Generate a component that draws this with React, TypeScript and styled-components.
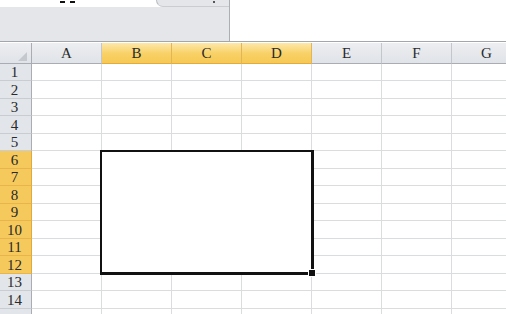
import React from "react";
import styled, { createGlobalStyle, css } from "styled-components";

const Global = createGlobalStyle`
  html, body { margin: 0; padding: 0; background: #ffffff; }
  body { width: 506px; height: 314px; overflow: hidden; }
  #root { width: 506px; height: 314px; overflow: hidden; }
`;

const Page = styled.div`
  width: 506px;
  height: 314px;
  display: flex;
  flex-direction: column;
  background: #fff;
  overflow: hidden;
`;

const TopArea = styled.div`
  flex-shrink: 0;
  display: flex;
  height: 41px;
  border-bottom: 1px solid #a3a7ac;
  box-sizing: content-box;
`;

const Ribbon = styled.div`
  width: 229px;
  display: flex;
  flex-direction: column;
  border-right: 1px solid #abafb4;
`;

const RibbonStrip = styled.div`
  position: relative;
  flex-shrink: 0;
  height: 7px;
  background: #fff;
`;

const Mark = styled.span<{ $left: number }>`
  position: absolute;
  top: 1px;
  left: ${(p) => p.$left}px;
  width: 5px;
  height: 2px;
  background: #111;
`;

const Tab = styled.div`
  position: absolute;
  left: 156px;
  right: 0;
  top: 0;
  height: 7px;
  background: #e4e6ea;
  border-left: 1px solid #b8bcc2;
  border-bottom: 1px solid #c9ccd0;
  border-bottom-left-radius: 7px;
  box-sizing: border-box;
`;

const Dot = styled.span`
  position: absolute;
  left: 56px;
  top: 1px;
  width: 2px;
  height: 2px;
  background: #555;
`;

const RibbonBody = styled.div`
  flex: 1;
  background: #e4e6ea;
`;

const Gap = styled.div`
  flex-shrink: 0;
  height: 1px;
  background: #fff;
`;

const SheetWrap = styled.div`
  position: relative;
  flex: 1;
  min-height: 0;
  overflow: hidden;
`;

const rowHeights = [17, 18, 17, 18, 17, 18, 17, 18, 17, 18, 17, 18, 17, 18];

const Sheet = styled.div`
  display: grid;
  grid-template-columns: 32px repeat(7, 70px);
  grid-template-rows: 21px ${rowHeights.map((h) => `${h}px`).join(" ")} 17px;
  font-family: "Liberation Serif", "DejaVu Serif", serif;
  font-size: 15px;
  color: #2a2a2a;
`;

const headerBase = css`
  box-sizing: border-box;
  display: flex;
  align-items: center;
  justify-content: center;
  line-height: 1;
`;

const Corner = styled.div`
  ${headerBase};
  position: relative;
  background: linear-gradient(#eceef1, #e0e3e7);
  border-right: 1px solid #a9adb3;
  border-bottom: 1px solid #a9adb3;
`;

const CornerTri = styled.svg`
  position: absolute;
  right: 4px;
  bottom: 2px;
`;

const ColHeader = styled.div<{ $active?: boolean }>`
  ${headerBase};
  padding-top: 1px;
  background: ${(p) =>
    p.$active
      ? "linear-gradient(#fde8aa, #f8d064 55%, #f6c955)"
      : "linear-gradient(#eceef1, #e0e3e7)"};
  border-right: 1px solid ${(p) => (p.$active ? "#e2b657" : "#c3c7cd")};
  border-bottom: 1px solid ${(p) => (p.$active ? "#e4ab3c" : "#a9adb3")};
`;

const RowHeader = styled.div<{ $active?: boolean }>`
  ${headerBase};
  padding-right: 2px;
  padding-top: 1px;
  background: ${(p) => (p.$active ? "#f6c95c" : "#e2e5ea")};
  border-right: 1px solid ${(p) => (p.$active ? "#e0a93a" : "#a9adb3")};
  border-bottom: 1px solid ${(p) => (p.$active ? "#e7b54c" : "#c9cdd2")};
`;

const Cell = styled.div`
  box-sizing: border-box;
  border-right: 1px solid #dadcde;
  border-bottom: 1px solid #dadcde;
  background: #fff;
`;

const Selection = styled.div`
  position: absolute;
  left: 100px;
  top: 107px;
  width: 214px;
  height: 125px;
  box-sizing: border-box;
  background: #fff;
  border-top: 2px solid #111;
  border-left: 2px solid #111;
  border-right: 3px solid #111;
  border-bottom: 3px solid #111;
  pointer-events: none;
`;

const FillHandle = styled.div`
  position: absolute;
  right: -5px;
  bottom: -5px;
  width: 6px;
  height: 6px;
  background: #111;
  border: 1px solid #fff;
`;

const columns = ["A", "B", "C", "D", "E", "F", "G"];
const activeCols = new Set(["B", "C", "D"]);

export default function App() {
  const rows = rowHeights.map((_, i) => i + 1);
  return (
    <Page>
      <Global />
      <TopArea>
        <Ribbon>
          <RibbonStrip>
            <Mark $left={60} />
            <Mark $left={70} />
            <Tab>
              <Dot />
            </Tab>
          </RibbonStrip>
          <RibbonBody />
        </Ribbon>
      </TopArea>
      <Gap />
      <SheetWrap>
        <Sheet>
          <Corner>
            <CornerTri width="9" height="9" viewBox="0 0 9 9">
              <polygon points="9,0 9,9 0,9" fill="#c5c9ce" />
            </CornerTri>
          </Corner>
          {columns.map((c) => (
            <ColHeader key={c} $active={activeCols.has(c)}>
              {c}
            </ColHeader>
          ))}
          {rows.map((r) => (
            <React.Fragment key={r}>
              <RowHeader $active={r >= 6 && r <= 12}>{r}</RowHeader>
              {columns.map((c) => (
                <Cell key={c} />
              ))}
            </React.Fragment>
          ))}
          <RowHeader />
          {columns.map((c) => (
            <Cell key={`last-${c}`} />
          ))}
        </Sheet>
        <Selection>
          <FillHandle />
        </Selection>
      </SheetWrap>
    </Page>
  );
}
